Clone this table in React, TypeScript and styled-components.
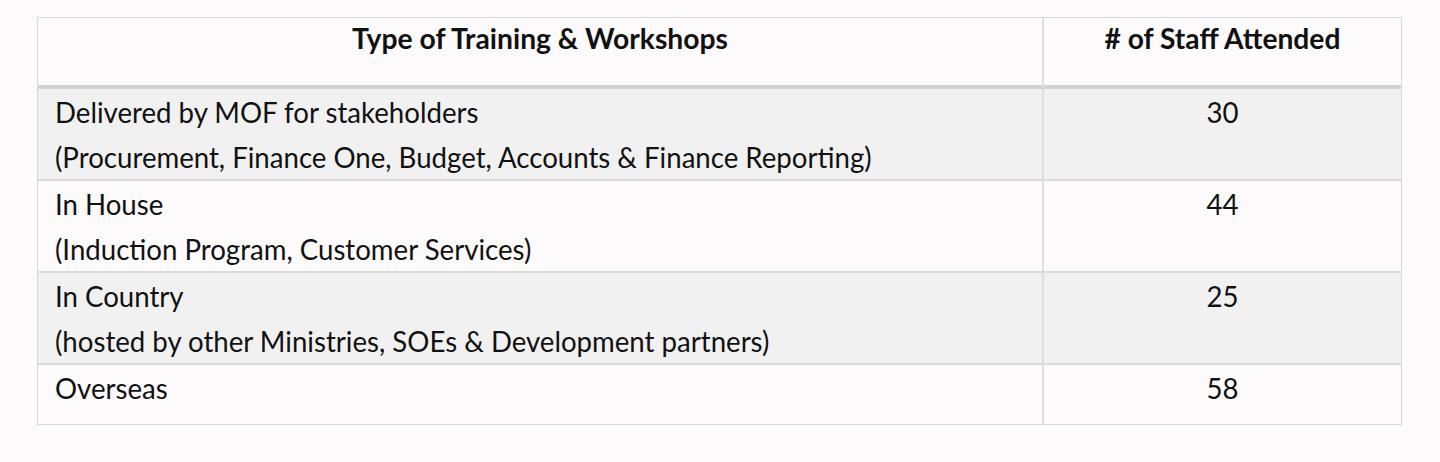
import styled, { createGlobalStyle } from "styled-components";

interface Row {
  title: string;
  detail?: string;
  count: number;
  shaded: boolean;
}

const rows: Row[] = [
  {
    title: "Delivered by MOF for stakeholders",
    detail: "(Procurement, Finance One, Budget, Accounts & Finance Reporting)",
    count: 30,
    shaded: true,
  },
  {
    title: "In House",
    detail: "(Induction Program, Customer Services)",
    count: 44,
    shaded: false,
  },
  {
    title: "In Country",
    detail: "(hosted by other Ministries, SOEs & Development partners)",
    count: 25,
    shaded: true,
  },
  { title: "Overseas", count: 58, shaded: false },
];

export default function App() {
  return (
    <>
      <GlobalStyle />
      <Page>
        <Table>
          <HeadCell>
            <Text $align="center" $squeeze={0.975}>
              Type of Training &amp; Workshops
            </Text>
          </HeadCell>
          <HeadCell $last>
            <Text $align="center" $squeeze={0.972}>
              # of Staff Attended
            </Text>
          </HeadCell>
          {rows.map((row, i) => (
            <BodyRow key={row.title} $shaded={row.shaded} $last={i === rows.length - 1}>
              <Cell>
                <Text>{row.title}</Text>
                {row.detail && <Text>{row.detail}</Text>}
              </Cell>
              <Cell $last>
                <Text $align="center">{row.count}</Text>
              </Cell>
            </BodyRow>
          ))}
        </Table>
      </Page>
    </>
  );
}

const GlobalStyle = createGlobalStyle`
  body {
    margin: 0;
    background: #fcfafb;
    font-family: Lato, "Open Sans", sans-serif;
    color: #111;
  }
`;

const Page = styled.div`
  padding: 17px 0 0 37px;
`;

const Table = styled.div`
  width: 1363px;
  display: grid;
  grid-template-columns: 1006px 357px;
  border: 1px solid #d8d8d8;
`;

const HeadCell = styled.div<{ $last?: boolean }>`
  height: 71px;
  box-sizing: border-box;
  border-right: ${(p) => (p.$last ? "none" : "2px solid #dedede")};
  border-bottom: 4px solid #d2d2d2;
  font-weight: 700;
  font-size: 29px;
  line-height: 40px;
  background: #fcfafb;
`;

const BodyRow = styled.div<{ $shaded: boolean; $last: boolean }>`
  display: contents;
  & > div {
    background: ${(p) => (p.$shaded ? "#f1f1f1" : "#fcfafb")};
    border-bottom: ${(p) => (p.$last ? "none" : "2px solid #dadada")};
    min-height: ${(p) => (p.$last ? "59px" : "auto")};
  }
`;

const Cell = styled.div<{ $last?: boolean }>`
  padding-left: ${(p) => (p.$last ? "0" : "17px")};
  border-right: ${(p) => (p.$last ? "none" : "2px solid #dedede")};
  font-size: 29px;
  line-height: 45px;
`;

const Text = styled.div<{ $align?: "left" | "center"; $squeeze?: number }>`
  text-align: ${(p) => p.$align ?? "left"};
  white-space: nowrap;
  transform: scaleX(${(p) => p.$squeeze ?? 0.952});
  transform-origin: ${(p) => (p.$align === "center" ? "center" : "left")} center;
`;
